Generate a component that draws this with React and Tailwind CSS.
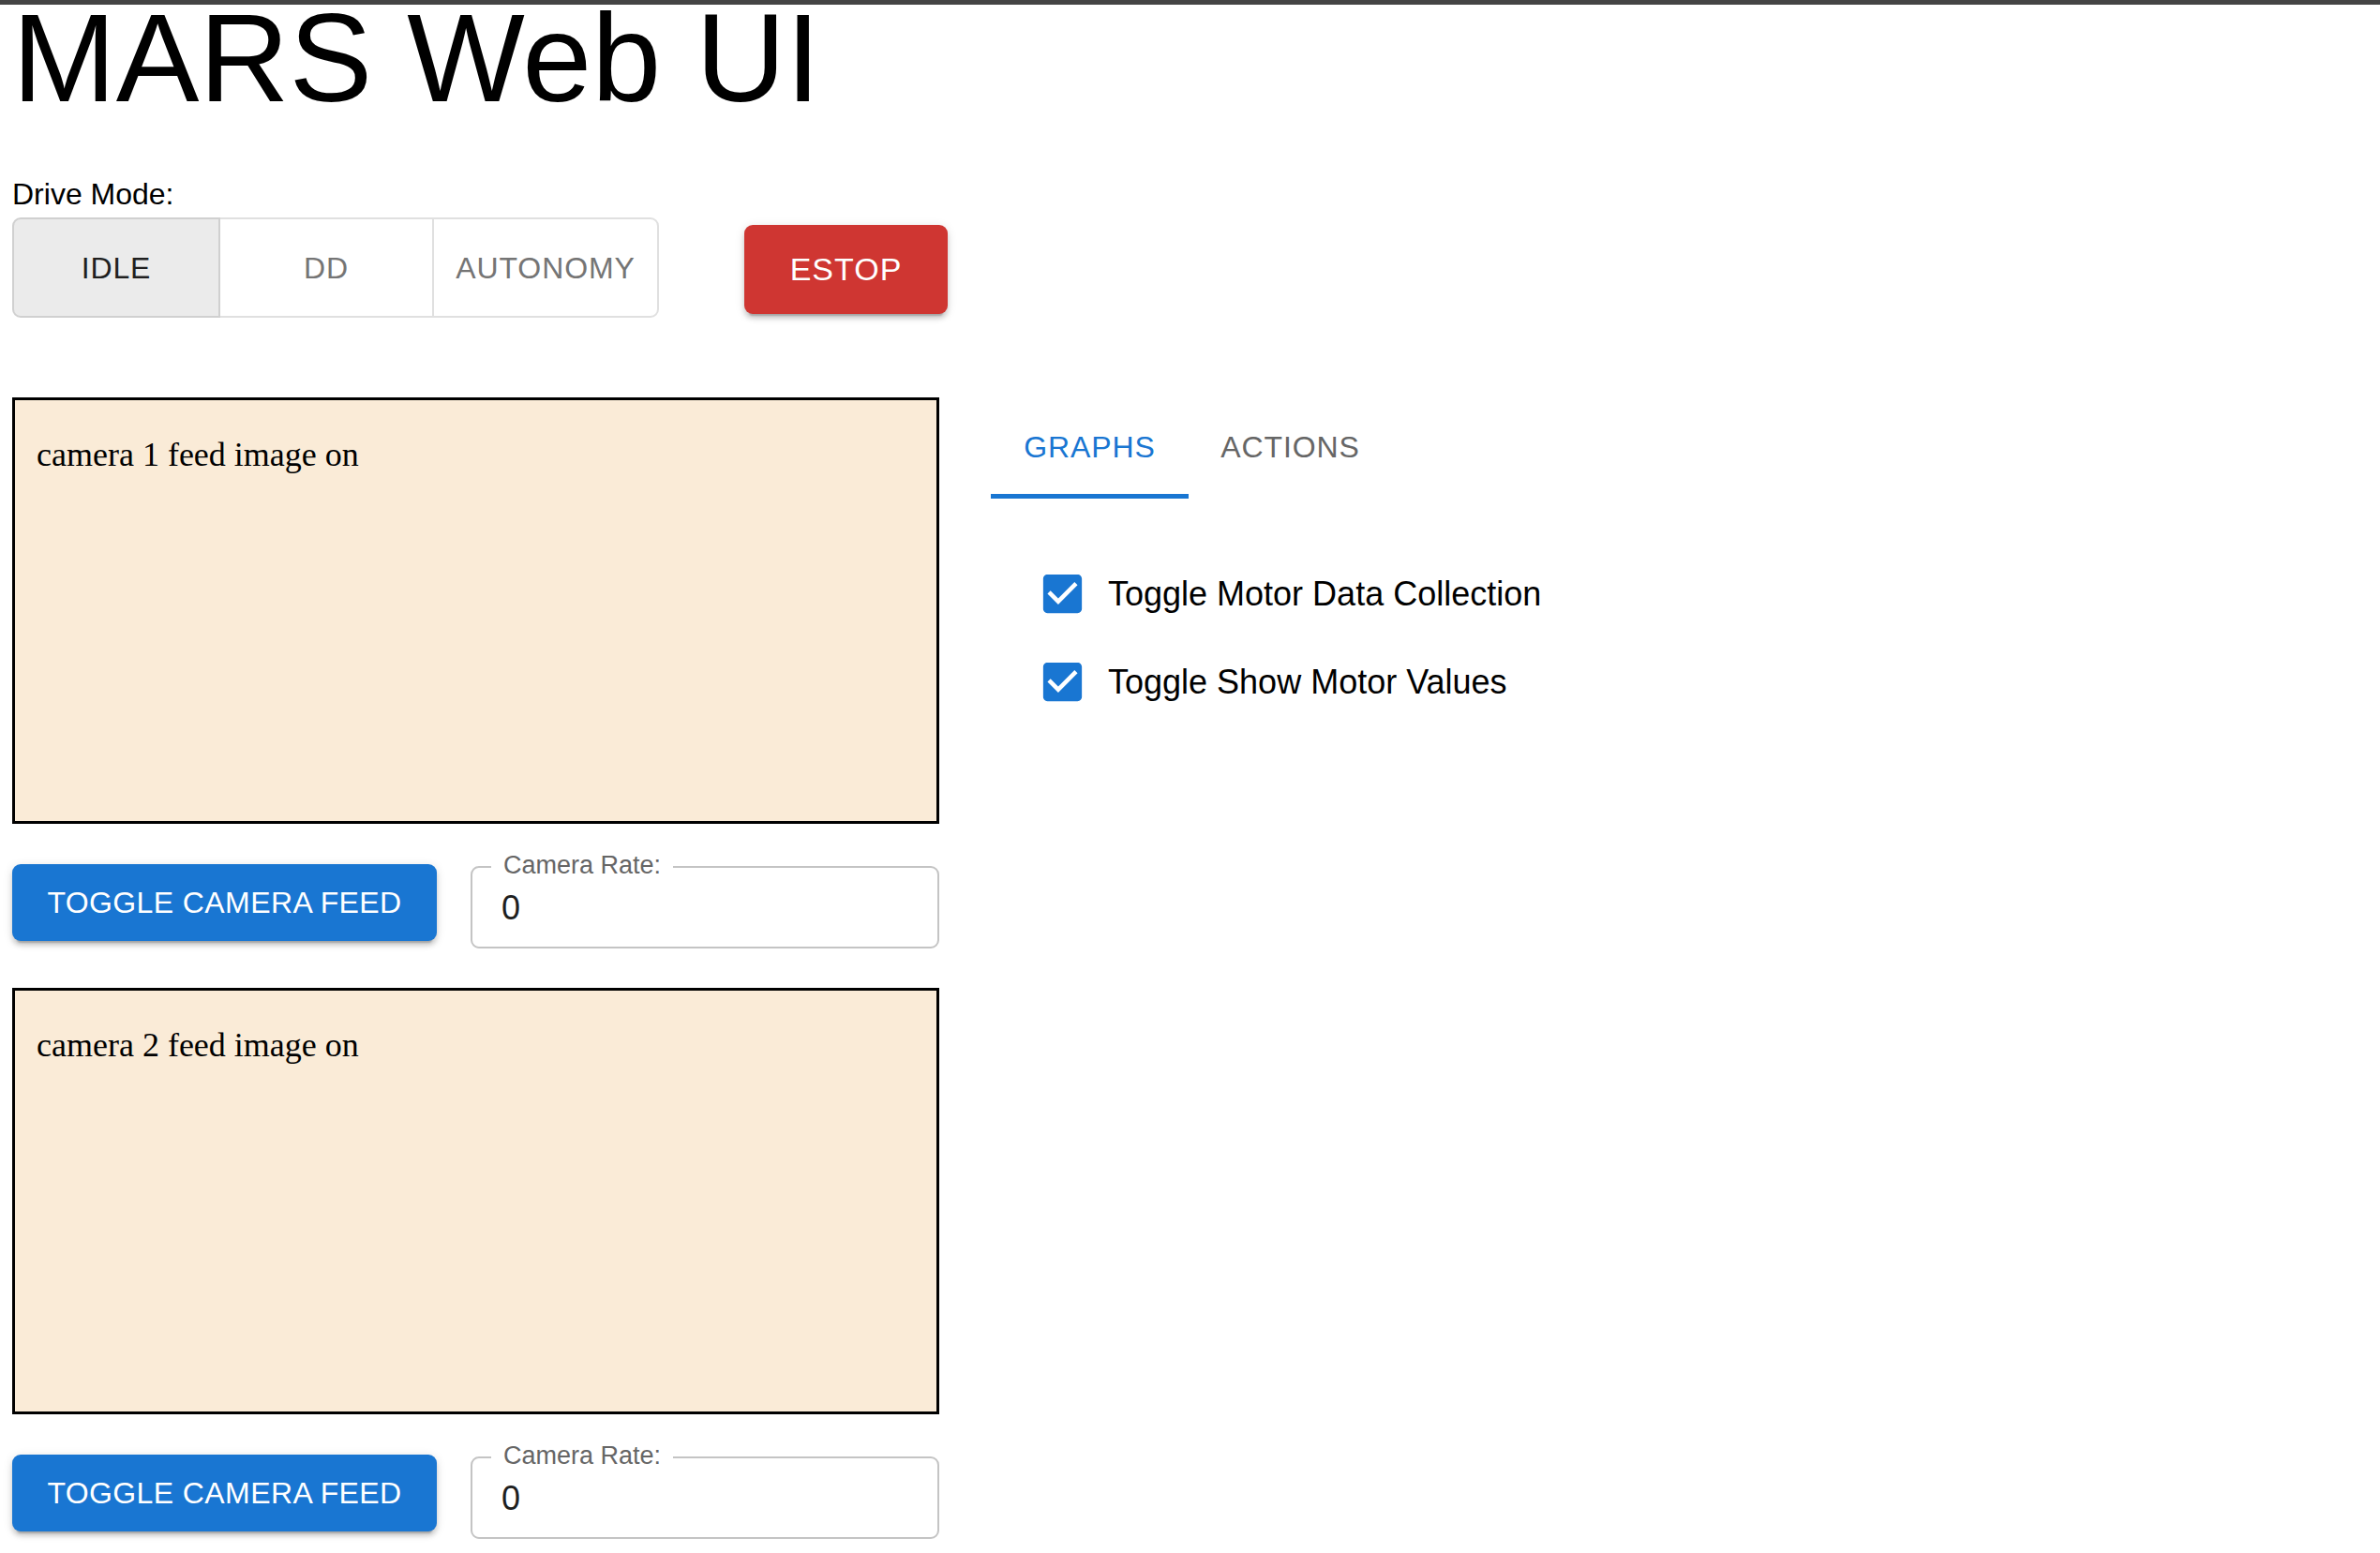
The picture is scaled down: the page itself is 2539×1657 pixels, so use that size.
import { useState } from 'react'

const MODES = [
  { key: 'IDLE', w: 'w-[222px]' },
  { key: 'DD', w: 'w-[230px]' },
  { key: 'AUTONOMY', w: 'w-[242px]' },
]

function CheckIcon() {
  return (
    <svg viewBox="0 0 24 24" className="w-[55px] h-[55px] shrink-0" fill="#1976d2">
      <path d="M19 3H5c-1.11 0-2 .9-2 2v14c0 1.1.89 2 2 2h14c1.11 0 2-.9 2-2V5c0-1.1-.89-2-2-2zm-9 14l-5-5 1.41-1.41L10 14.17l7.59-7.59L19 8l-9 9z" />
    </svg>
  )
}

function CameraBlock({ n, on, onToggle }) {
  return (
    <div className="flex flex-col">
      <div className="h-[455px] w-[989px] border-[3px] border-black bg-[#faebd7] pl-[23px] pt-[38px]">
        <p className="font-['Liberation_Serif','Times_New_Roman',serif] text-[36px] leading-[41px] text-black">
          camera {n} feed image {on ? 'on' : 'off'}
        </p>
      </div>
      <div className="flex items-start gap-[36px] mt-[43px]">
        <button onClick={onToggle} className="w-[453px] h-[82px] rounded-[9px] bg-[#1976d2] text-white text-[32px] tracking-[0.4px] shadow-[0_7px_2px_-5px_rgba(0,0,0,0.2),0_5px_5px_0_rgba(0,0,0,0.14),0_2px_11px_0_rgba(0,0,0,0.12)]">
          TOGGLE CAMERA FEED
        </button>
        <div className="relative mt-[2px] w-[500px] h-[88px] rounded-[9px] border-2 border-[#c4c4c4] flex items-center pl-[31px]">
          <span className="absolute left-[20px] top-[-16px] bg-white px-[13px] text-[27px] leading-[27px] text-[#666666]">Camera Rate:</span>
          <span className="text-[36px] leading-[41px] text-[#1f1f1f]">0</span>
        </div>
      </div>
    </div>
  )
}

export default function App() {
  const [mode, setMode] = useState('IDLE')
  const [tab, setTab] = useState('GRAPHS')
  const [cams, setCams] = useState([true, true])
  const [motorData, setMotorData] = useState(true)
  const [motorVals, setMotorVals] = useState(true)

  const toggleCam = (i) => setCams(cams.map((c, j) => (j === i ? !c : c)))

  return (
    <div className="min-h-screen bg-white font-['Liberation_Sans',Arial,sans-serif] text-black">
      <div className="h-[5px] bg-[#444444]" />
      <div className="pl-[13px]">
        <h1 className="text-[133px] leading-[114px] font-normal">MARS Web UI</h1>

        <div className="mt-[70px] text-[32px] leading-[37px]">Drive Mode:</div>
        <div className="flex items-start mt-[6px]">
          <div className="flex h-[107px]">
            {MODES.map((m, i) => (
              <button
                key={m.key}
                onClick={() => setMode(m.key)}
                className={`${m.w} h-full text-[32px] tracking-[0.9px] border-2 ${i > 0 ? '-ml-[2px]' : ''} ${i === 0 ? 'rounded-l-[9px]' : ''} ${i === MODES.length - 1 ? 'rounded-r-[9px]' : ''} ${mode === m.key ? 'bg-[#ebebeb] text-[#1f1f1f] border-[#d0d0d0] relative z-10' : 'bg-white text-[#757575] border-[#e0e0e0]'}`}
              >
                {m.key}
              </button>
            ))}
          </div>
          <button className="ml-[91px] mt-[8px] w-[217px] h-[95px] rounded-[9px] bg-[#cf3632] text-white text-[34px] tracking-[1px] shadow-[0_7px_2px_-5px_rgba(0,0,0,0.2),0_5px_5px_0_rgba(0,0,0,0.14),0_2px_11px_0_rgba(0,0,0,0.12)]">
            ESTOP
          </button>
        </div>

        <div className="flex items-start mt-[85px]">
          <div className="flex flex-col gap-[42px]">
            <CameraBlock n={1} on={cams[0]} onToggle={() => toggleCam(0)} />
            <CameraBlock n={2} on={cams[1]} onToggle={() => toggleCam(1)} />
          </div>

          <div className="ml-[55px] -mt-[2px] flex flex-col">
            <div className="flex">
              {[
                { key: 'GRAPHS', w: 'w-[211px]' },
                { key: 'ACTIONS', w: 'w-[217px]' },
              ].map((t) => (
                <button key={t.key} onClick={() => setTab(t.key)} className={`${t.w} h-[110px] flex flex-col`}>
                  <span className={`flex-1 flex items-center justify-center pt-[5px] text-[32px] tracking-[0.9px] ${tab === t.key ? 'text-[#1976d2]' : 'text-[#666666]'}`}>
                    {t.key}
                  </span>
                  <span className={`h-[5px] w-full ${tab === t.key ? 'bg-[#1976d2]' : 'bg-transparent'}`} />
                </button>
              ))}
            </div>

            {tab === 'GRAPHS' && (
              <div className="pl-[49px] pt-[54px] flex flex-col">
                <label onClick={() => setMotorData(!motorData)} className="flex items-center h-[94px] gap-[21px] cursor-pointer">
                  {motorData ? <CheckIcon /> : <span className="w-[55px] h-[55px]" />}
                  <span className="text-[36px] leading-[41px]">Toggle Motor Data Collection</span>
                </label>
                <label onClick={() => setMotorVals(!motorVals)} className="flex items-center h-[94px] gap-[21px] cursor-pointer">
                  {motorVals ? <CheckIcon /> : <span className="w-[55px] h-[55px]" />}
                  <span className="text-[36px] leading-[41px]">Toggle Show Motor Values</span>
                </label>
              </div>
            )}
          </div>
        </div>
      </div>
    </div>
  )
}
